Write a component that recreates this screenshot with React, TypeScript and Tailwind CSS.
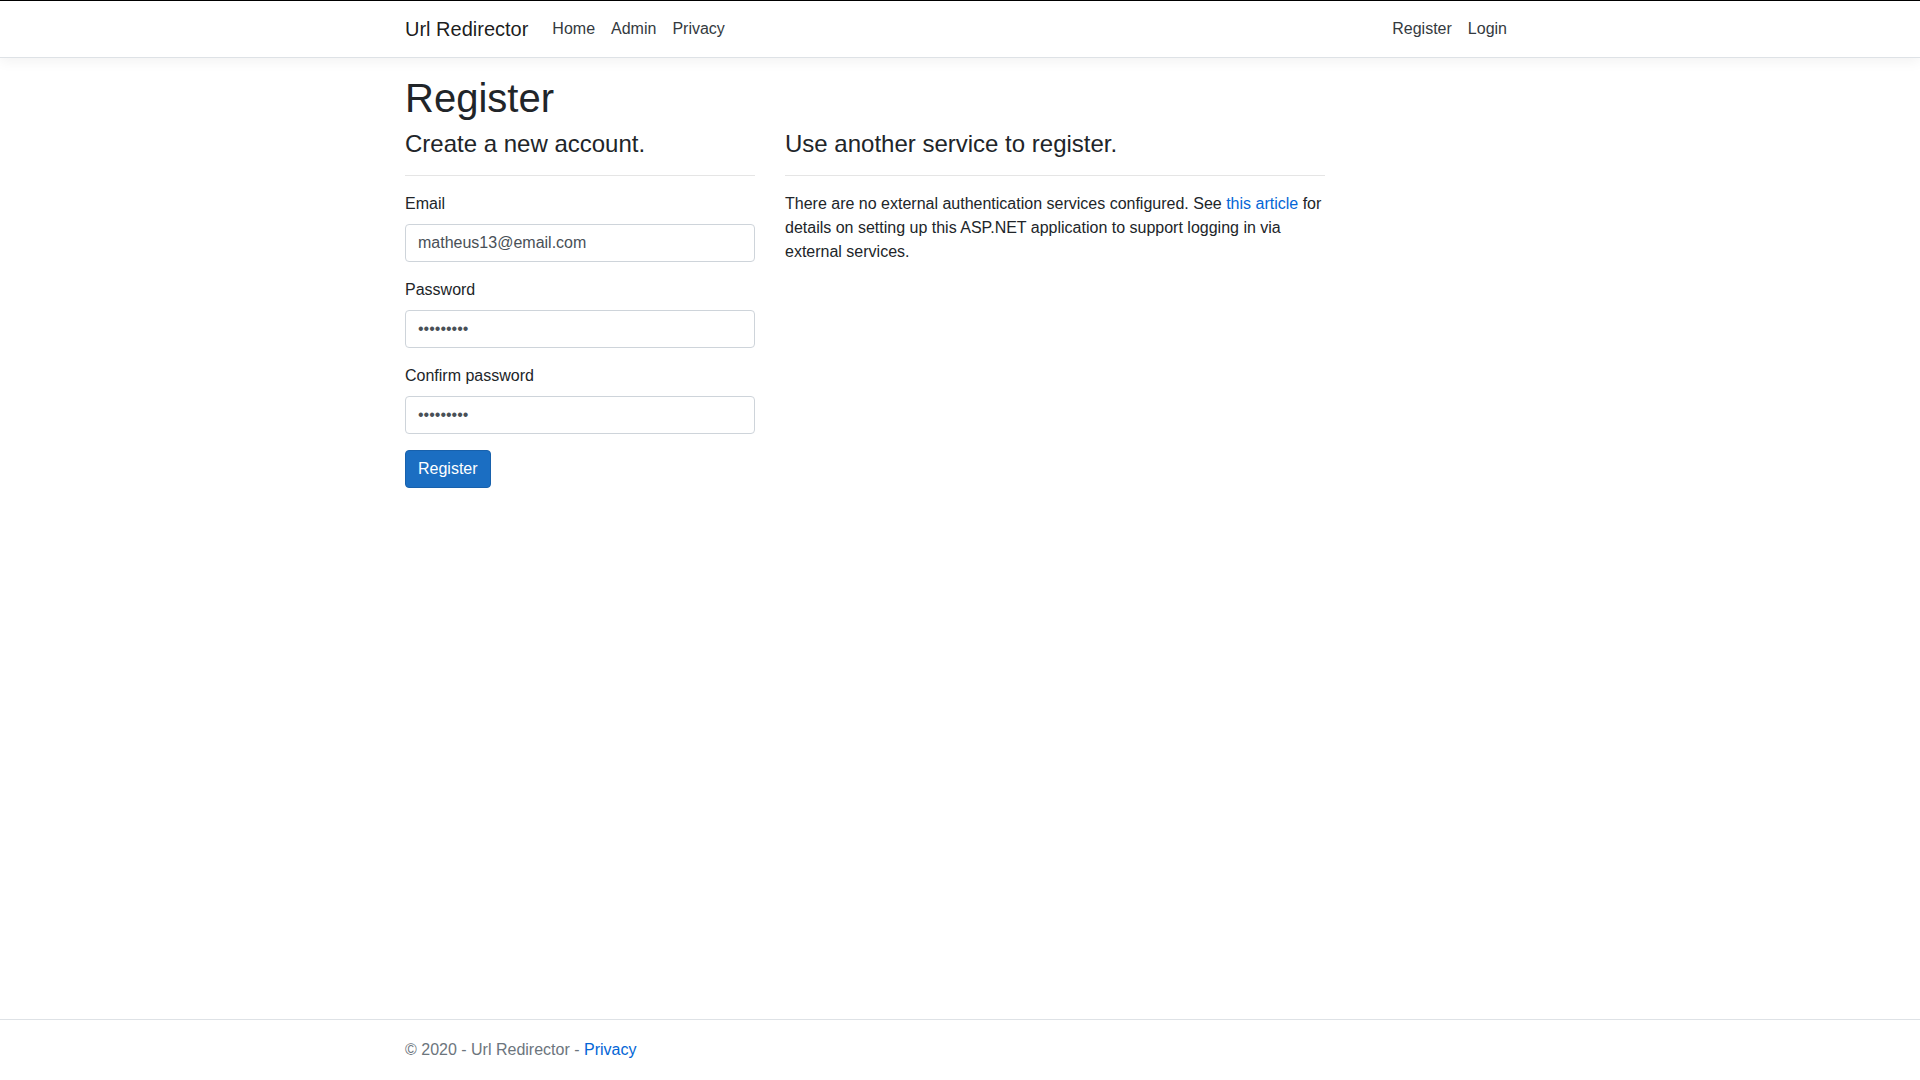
export default function App() {
  const font = "font-['Liberation_Sans',Arial,sans-serif]"
  return (
    <div className={`min-h-screen flex flex-col bg-white text-[#212529] text-[16px] leading-[1.5] ${font}`}>
      <header>
        <nav className="bg-white border-t border-t-black border-b border-b-[#dee2e6] shadow-[0_4px_12px_rgba(0,0,0,0.05)] py-2 mb-4">
          <div className="w-[1140px] mx-auto px-[15px] flex items-center">
            <a className="text-[20px] leading-[1.5] py-[5px] mr-4 text-[rgba(0,0,0,0.9)]">Url Redirector</a>
            <ul className="flex flex-1">
              <li><a className="block px-2 py-2 text-[#343a40]">Home</a></li>
              <li><a className="block px-2 py-2 text-[#343a40]">Admin</a></li>
              <li><a className="block px-2 py-2 text-[#343a40]">Privacy</a></li>
            </ul>
            <ul className="flex">
              <li><a className="block px-2 py-2 text-[#343a40]">Register</a></li>
              <li><a className="block px-2 py-2 text-[#343a40]">Login</a></li>
            </ul>
          </div>
        </nav>
      </header>

      <main className="w-[1140px] mx-auto px-[15px] pb-4">
        <h1 className="text-[40px] leading-[1.2] font-medium mb-2">Register</h1>
        <div className="flex -mx-[15px]">
          <div className="w-[380px] px-[15px]">
            <h4 className="text-[24px] leading-[1.2] font-medium mb-2">Create a new account.</h4>
            <hr className="my-4 border-0 border-t border-[rgba(0,0,0,0.1)]" />
            <div className="mb-4">
              <label className="inline-block mb-2">Email</label>
              <input
                className="block w-full h-[38px] px-3 py-1.5 border border-[#ced4da] rounded text-[#495057] bg-white"
                defaultValue="matheus13@email.com"
              />
            </div>
            <div className="mb-4">
              <label className="inline-block mb-2">Password</label>
              <input
                type="password"
                className="block w-full h-[38px] px-3 py-1.5 border border-[#ced4da] rounded text-[#495057] bg-white"
                defaultValue="123456789"
              />
            </div>
            <div className="mb-4">
              <label className="inline-block mb-2">Confirm password</label>
              <input
                type="password"
                className="block w-full h-[38px] px-3 py-1.5 border border-[#ced4da] rounded text-[#495057] bg-white"
                defaultValue="123456789"
              />
            </div>
            <button className="px-3 py-1.5 leading-[1.5] text-white bg-[#1b6ec2] border border-[#1861ac] rounded">
              Register
            </button>
          </div>
          <div className="w-[570px] px-[15px]">
            <h4 className="text-[24px] leading-[1.2] font-medium mb-2">Use another service to register.</h4>
            <hr className="my-4 border-0 border-t border-[rgba(0,0,0,0.1)]" />
            <div>
              <p>
                There are no external authentication services configured. See{' '}
                <a className="text-[#0366d6]">this article</a> for details on setting up this ASP.NET
                application to support logging in via external services.
              </p>
            </div>
          </div>
        </div>
      </main>

      <footer className="mt-auto border-t border-[#dee2e6] text-[#6c757d] leading-[60px] whitespace-nowrap">
        <div className="w-[1140px] mx-auto px-[15px]">
          &copy; 2020 - Url Redirector - <a className="text-[#0366d6]">Privacy</a>
        </div>
      </footer>
    </div>
  )
}
